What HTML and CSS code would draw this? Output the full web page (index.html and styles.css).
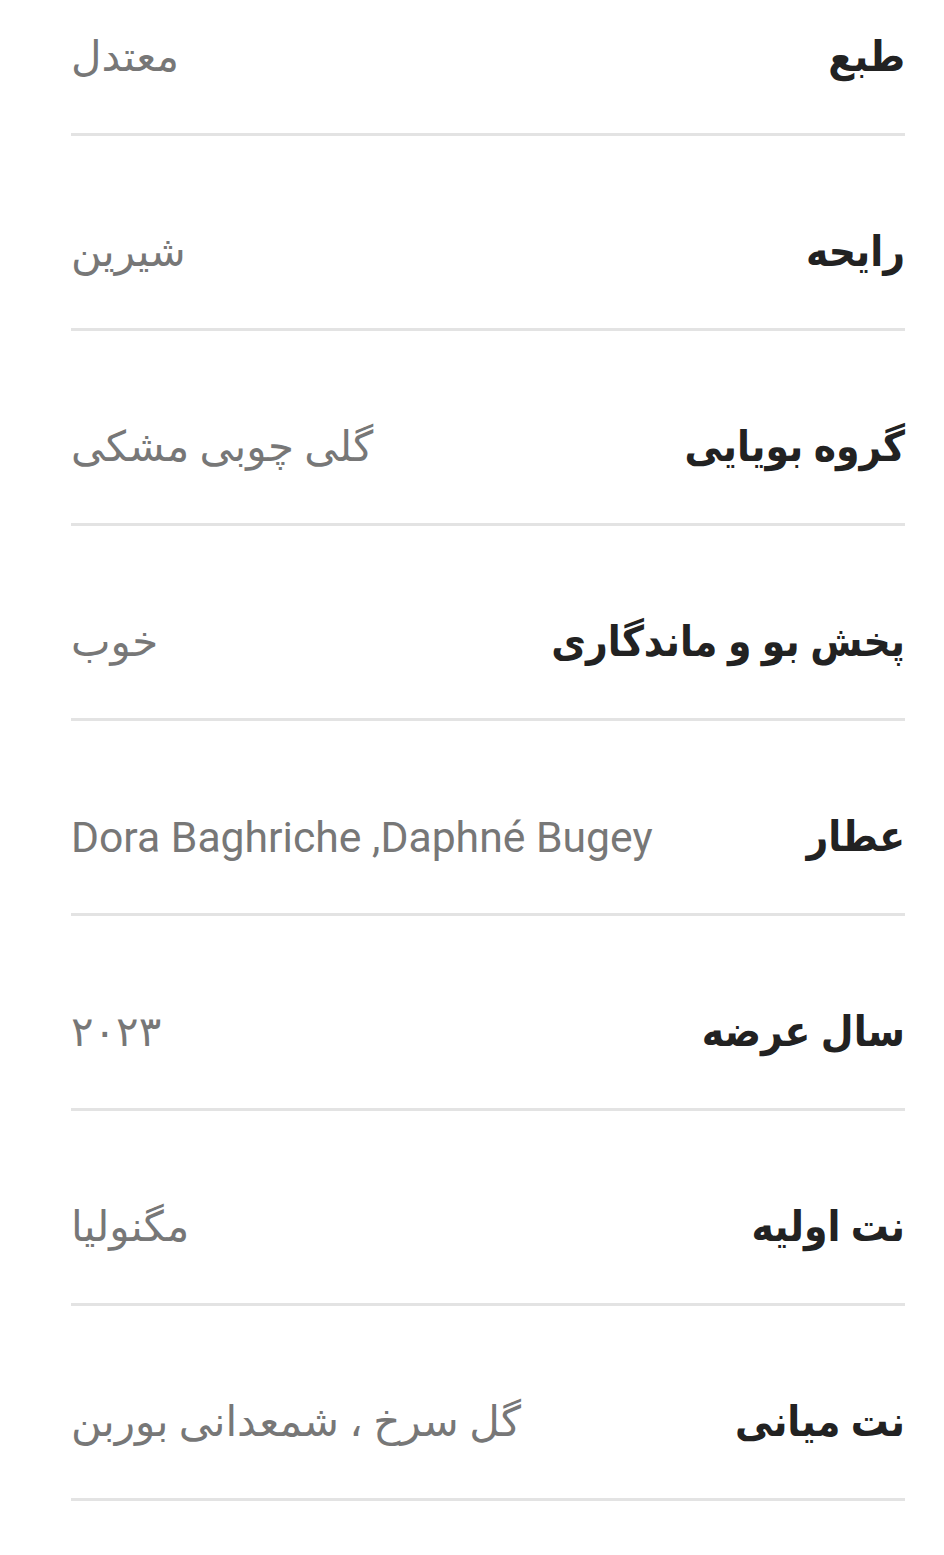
FILE: index.html
```html
<!DOCTYPE html>
<html lang="fa" dir="rtl">
<head>
<meta charset="utf-8">
<title>مشخصات</title>
<link rel="stylesheet" href="styles.css">
</head>
<body>
<div class="specs">
  <div class="row"><span class="label">طبع</span><span class="value">معتدل</span></div>
  <div class="row"><span class="label">رایحه</span><span class="value">شیرین</span></div>
  <div class="row"><span class="label">گروه بویایی</span><span class="value">گلی چوبی مشکی</span></div>
  <div class="row"><span class="label">پخش بو و ماندگاری</span><span class="value">خوب</span></div>
  <div class="row"><span class="label">عطار</span><span class="value latin">Dora Baghriche ,Daphné Bugey</span></div>
  <div class="row"><span class="label">سال عرضه</span><span class="value">۲۰۲۳</span></div>
  <div class="row"><span class="label">نت اولیه</span><span class="value">مگنولیا</span></div>
  <div class="row"><span class="label">نت میانی</span><span class="value">گل سرخ ، شمعدانی بوربن</span></div>
</div>
</body>
</html>
```

FILE: styles.css
```css
html, body {
  margin: 0;
  padding: 0;
  background: #ffffff;
}

body {
  font-family: Roboto, "DejaVu Sans", sans-serif;
  overflow: hidden;
}

.specs {
  margin-top: -59px;
  padding: 0 39px 0 71px;
}

.row {
  display: flex;
  justify-content: space-between;
  align-items: center;
  padding: 86px 0 46px 0;
  line-height: 60px;
  font-size: 42px;
  border-bottom: 3px solid #e3e3e3;
}

.label {
  color: #222222;
  font-family: Roboto, "DejaVu Sans Condensed", "DejaVu Sans", sans-serif;
  font-weight: bold;
}

.value {
  color: #777777;
}

.value.latin {
  font-size: 42.7px;
}
```
